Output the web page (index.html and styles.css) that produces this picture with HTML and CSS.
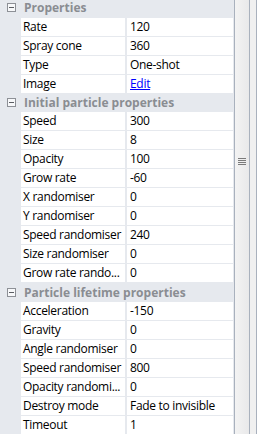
FILE: index.html
```html
<!DOCTYPE html>
<html lang="en">
<head>
  <meta charset="UTF-8" />
  <title>Properties</title>
  <link rel="stylesheet" href="styles.css">
</head>
<body>
  <div class="panel">
    <div class="grid">
      <div class="category">
        <svg class="toggle" width="9" height="9" viewBox="0 0 9 9"><rect x="0.5" y="0.5" width="8" height="8" fill="none" stroke="#8d9096"/><path d="M2 4.5h5" stroke="#5b5e63"/></svg>
        <span>Properties</span>
      </div>
      <div class="row"><span class="gutter"></span><span class="name">Rate</span><span class="value">120</span></div>
      <div class="row"><span class="gutter"></span><span class="name">Spray cone</span><span class="value">360</span></div>
      <div class="row"><span class="gutter"></span><span class="name">Type</span><span class="value">One-shot</span></div>
      <div class="row"><span class="gutter"></span><span class="name">Image</span><span class="value"><a href="#">Edit</a></span></div>

      <div class="category">
        <svg class="toggle" width="9" height="9" viewBox="0 0 9 9"><rect x="0.5" y="0.5" width="8" height="8" fill="none" stroke="#8d9096"/><path d="M2 4.5h5" stroke="#5b5e63"/></svg>
        <span>Initial particle properties</span>
      </div>
      <div class="row"><span class="gutter"></span><span class="name">Speed</span><span class="value">300</span></div>
      <div class="row"><span class="gutter"></span><span class="name">Size</span><span class="value">8</span></div>
      <div class="row"><span class="gutter"></span><span class="name">Opacity</span><span class="value">100</span></div>
      <div class="row"><span class="gutter"></span><span class="name">Grow rate</span><span class="value">-60</span></div>
      <div class="row"><span class="gutter"></span><span class="name">X randomiser</span><span class="value">0</span></div>
      <div class="row"><span class="gutter"></span><span class="name">Y randomiser</span><span class="value">0</span></div>
      <div class="row"><span class="gutter"></span><span class="name">Speed randomiser</span><span class="value">240</span></div>
      <div class="row"><span class="gutter"></span><span class="name">Size randomiser</span><span class="value">0</span></div>
      <div class="row"><span class="gutter"></span><span class="name">Grow rate rando...</span><span class="value">0</span></div>

      <div class="category">
        <svg class="toggle" width="9" height="9" viewBox="0 0 9 9"><rect x="0.5" y="0.5" width="8" height="8" fill="none" stroke="#8d9096"/><path d="M2 4.5h5" stroke="#5b5e63"/></svg>
        <span>Particle lifetime properties</span>
      </div>
      <div class="row"><span class="gutter"></span><span class="name">Acceleration</span><span class="value">-150</span></div>
      <div class="row"><span class="gutter"></span><span class="name">Gravity</span><span class="value">0</span></div>
      <div class="row"><span class="gutter"></span><span class="name">Angle randomiser</span><span class="value">0</span></div>
      <div class="row"><span class="gutter"></span><span class="name">Speed randomiser</span><span class="value">800</span></div>
      <div class="row"><span class="gutter"></span><span class="name">Opacity randomi...</span><span class="value">0</span></div>
      <div class="row"><span class="gutter"></span><span class="name">Destroy mode</span><span class="value">Fade to invisible</span></div>
      <div class="row"><span class="gutter"></span><span class="name">Timeout</span><span class="value">1</span></div>
    </div>

    <div class="scrollbar">
      <div class="thumb">
        <div class="grip"><i></i><i></i><i></i><i></i></div>
      </div>
    </div>
    <div class="edge"></div>
  </div>
</body>
</html>
```

FILE: styles.css
```css
body {
  margin: 0;
  padding: 0;
  overflow: hidden;
  font-family: "Open Sans", "Noto Sans", sans-serif;
  font-size: 12px;
  color: #000;
  background: #f0f0f0;
}

.panel {
  display: flex;
  width: 257px;
  height: 434px;
  overflow: hidden;
}

.grid {
  width: 234px;
  flex: none;
  margin-top: -1px;
  background: #e6e9ee;
  display: flex;
  flex-direction: column;
  gap: 1px;
}

.category {
  height: 18px;
  display: flex;
  align-items: center;
  padding-left: 7px;
  gap: 8px;
  font-weight: bold;
  color: #8a8d92;
  white-space: nowrap;
}

.toggle {
  flex: none;
  background: #f7f8fa;
}

.row {
  height: 18px;
  display: grid;
  grid-template-columns: 21px 105px 107px;
  line-height: 18px;
  letter-spacing: -0.3px;
  white-space: nowrap;
}

.gutter {
  background: #e6e9ee;
}

.name {
  background: #fff;
  padding-left: 2px;
  margin-right: 1px;
  overflow: hidden;
}

.value {
  background: #fff;
  padding-left: 3px;
  margin-left: 1px;
  overflow: hidden;
}

.value a {
  color: #0000ff;
  text-decoration: underline;
}

.scrollbar {
  width: 16px;
  flex: none;
  display: flex;
}

.thumb {
  flex: 1;
  border-left: 1px solid #a9b1bd;
  border-right: 1px solid #a9b1bd;
  background: linear-gradient(to right, #f3f3f3, #e9e9ea);
  display: flex;
  justify-content: center;
  padding-top: 158px;
}

.grip {
  width: 8px;
  height: 7px;
  display: flex;
  flex-direction: column;
  gap: 1px;
}

.grip i {
  display: block;
  height: 1px;
  background: #7a7a7a;
}

.edge {
  flex: 1;
  background: #f0f0f0;
  border-right: 1px solid #a9b1bd;
}
```
